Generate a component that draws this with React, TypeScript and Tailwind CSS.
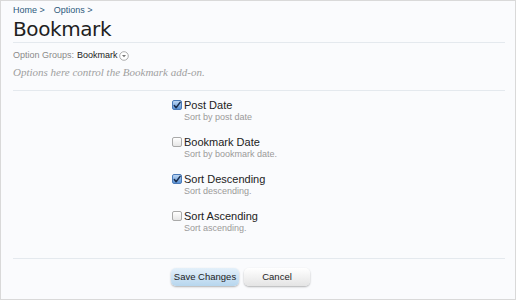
import React from 'react';

type TOption = {
    label: string;
    hint: string;
    checked: boolean;
}

const options: TOption[] = [
    { label: 'Post Date', hint: 'Sort by post date', checked: true },
    { label: 'Bookmark Date', hint: 'Sort by bookmark date.', checked: false },
    { label: 'Sort Descending', hint: 'Sort descending.', checked: true },
    { label: 'Sort Ascending', hint: 'Sort ascending.', checked: false },
];

const Checkbox = ({ checked }: { checked: boolean }) => {
    if (checked) {
        return <span className="w-[10px] h-[10px] rounded-[2px] border border-[#4a7ab8] bg-gradient-to-b from-[#bcd6f3] to-[#5b93d6] flex items-center justify-center">
            <svg width="9" height="9" viewBox="0 0 9 9">
                <path d="M1.5 4.5 L3.5 7 L8 1" fill="none" stroke="#1b2f4f" strokeWidth="1.7" strokeLinecap="round" strokeLinejoin="round" />
            </svg>
        </span>;
    }
    return <span className="w-[10px] h-[10px] rounded-[2px] border border-[#a9a9a9] bg-gradient-to-b from-white to-[#e6e6e6]" />;
}

export default function App() {
    return <div className="w-[516px] h-[300px] border border-[#d9d9d9] bg-[#fafbfd] px-3 font-['Liberation_Sans',sans-serif] flex flex-col">
        <div className="pt-[4px] text-[9px] leading-[10px] text-[#2d5a7c] flex gap-[9px]">
            <span>Home &gt;</span>
            <span>Options &gt;</span>
        </div>
        <h1 className="mt-[4px] text-[20px] leading-[20px] text-[#1f1f1f] font-['DejaVu_Sans',sans-serif] tracking-[-0.4px]">Bookmark</h1>
        <div className="mt-[3px] mr-[-2px] h-px bg-[#e4e9ee]" />
        <div className="mt-[7px] text-[9px] leading-[11px] text-[#8a8a8a] flex items-center">
            <span>Option Groups:</span>
            <span className="ml-[3px] text-[#222]">Bookmark</span>
            <svg className="ml-[1px]" width="10" height="10" viewBox="0 0 10 10">
                <circle cx="5" cy="5" r="4.3" fill="#fff" stroke="#9a9a9a" strokeWidth="0.8" />
                <path d="M3 4 L7 4 L5 6.3 Z" fill="#777" />
            </svg>
        </div>
        <p className="mt-[5px] text-[11px] leading-[13px] italic text-[#a0a0a0] font-['Liberation_Serif',serif]">Options here control the Bookmark add-on.</p>
        <div className="mt-[11px] mr-[-2px] h-px bg-[#e4e9ee]" />
        <div className="pl-[159px] pt-[8px] flex flex-col gap-[13px]">
            {options.map((option, key) =>
                <div key={key} className="flex flex-col">
                    <label className="flex items-center gap-[1px] text-[11px] leading-[12px] text-[#222]">
                        <Checkbox checked={option.checked} />
                        <span className="ml-[1px]">{option.label}</span>
                    </label>
                    <span className="ml-[12px] mt-[1px] text-[9px] leading-[11px] text-[#9a9a9a]">{option.hint}</span>
                </div>)}
        </div>
        <div className="mt-auto mr-[-2px] h-px bg-[#e4e9ee]" />
        <div className="pt-[9px] pb-[13px] pl-[158px] flex gap-[5px]">
            <button className="w-[68px] h-[18px] rounded-[5px] text-[9.5px] text-[#222] bg-gradient-to-b from-[#e4f0fa] to-[#b7d6ee] shadow-[0_1px_2px_rgba(0,0,0,0.3)]">Save Changes</button>
            <button className="w-[66px] h-[18px] rounded-[5px] text-[9.5px] text-[#222] bg-gradient-to-b from-white to-[#e4e4e4] shadow-[0_1px_2px_rgba(0,0,0,0.3)]">Cancel</button>
        </div>
    </div>;
}
